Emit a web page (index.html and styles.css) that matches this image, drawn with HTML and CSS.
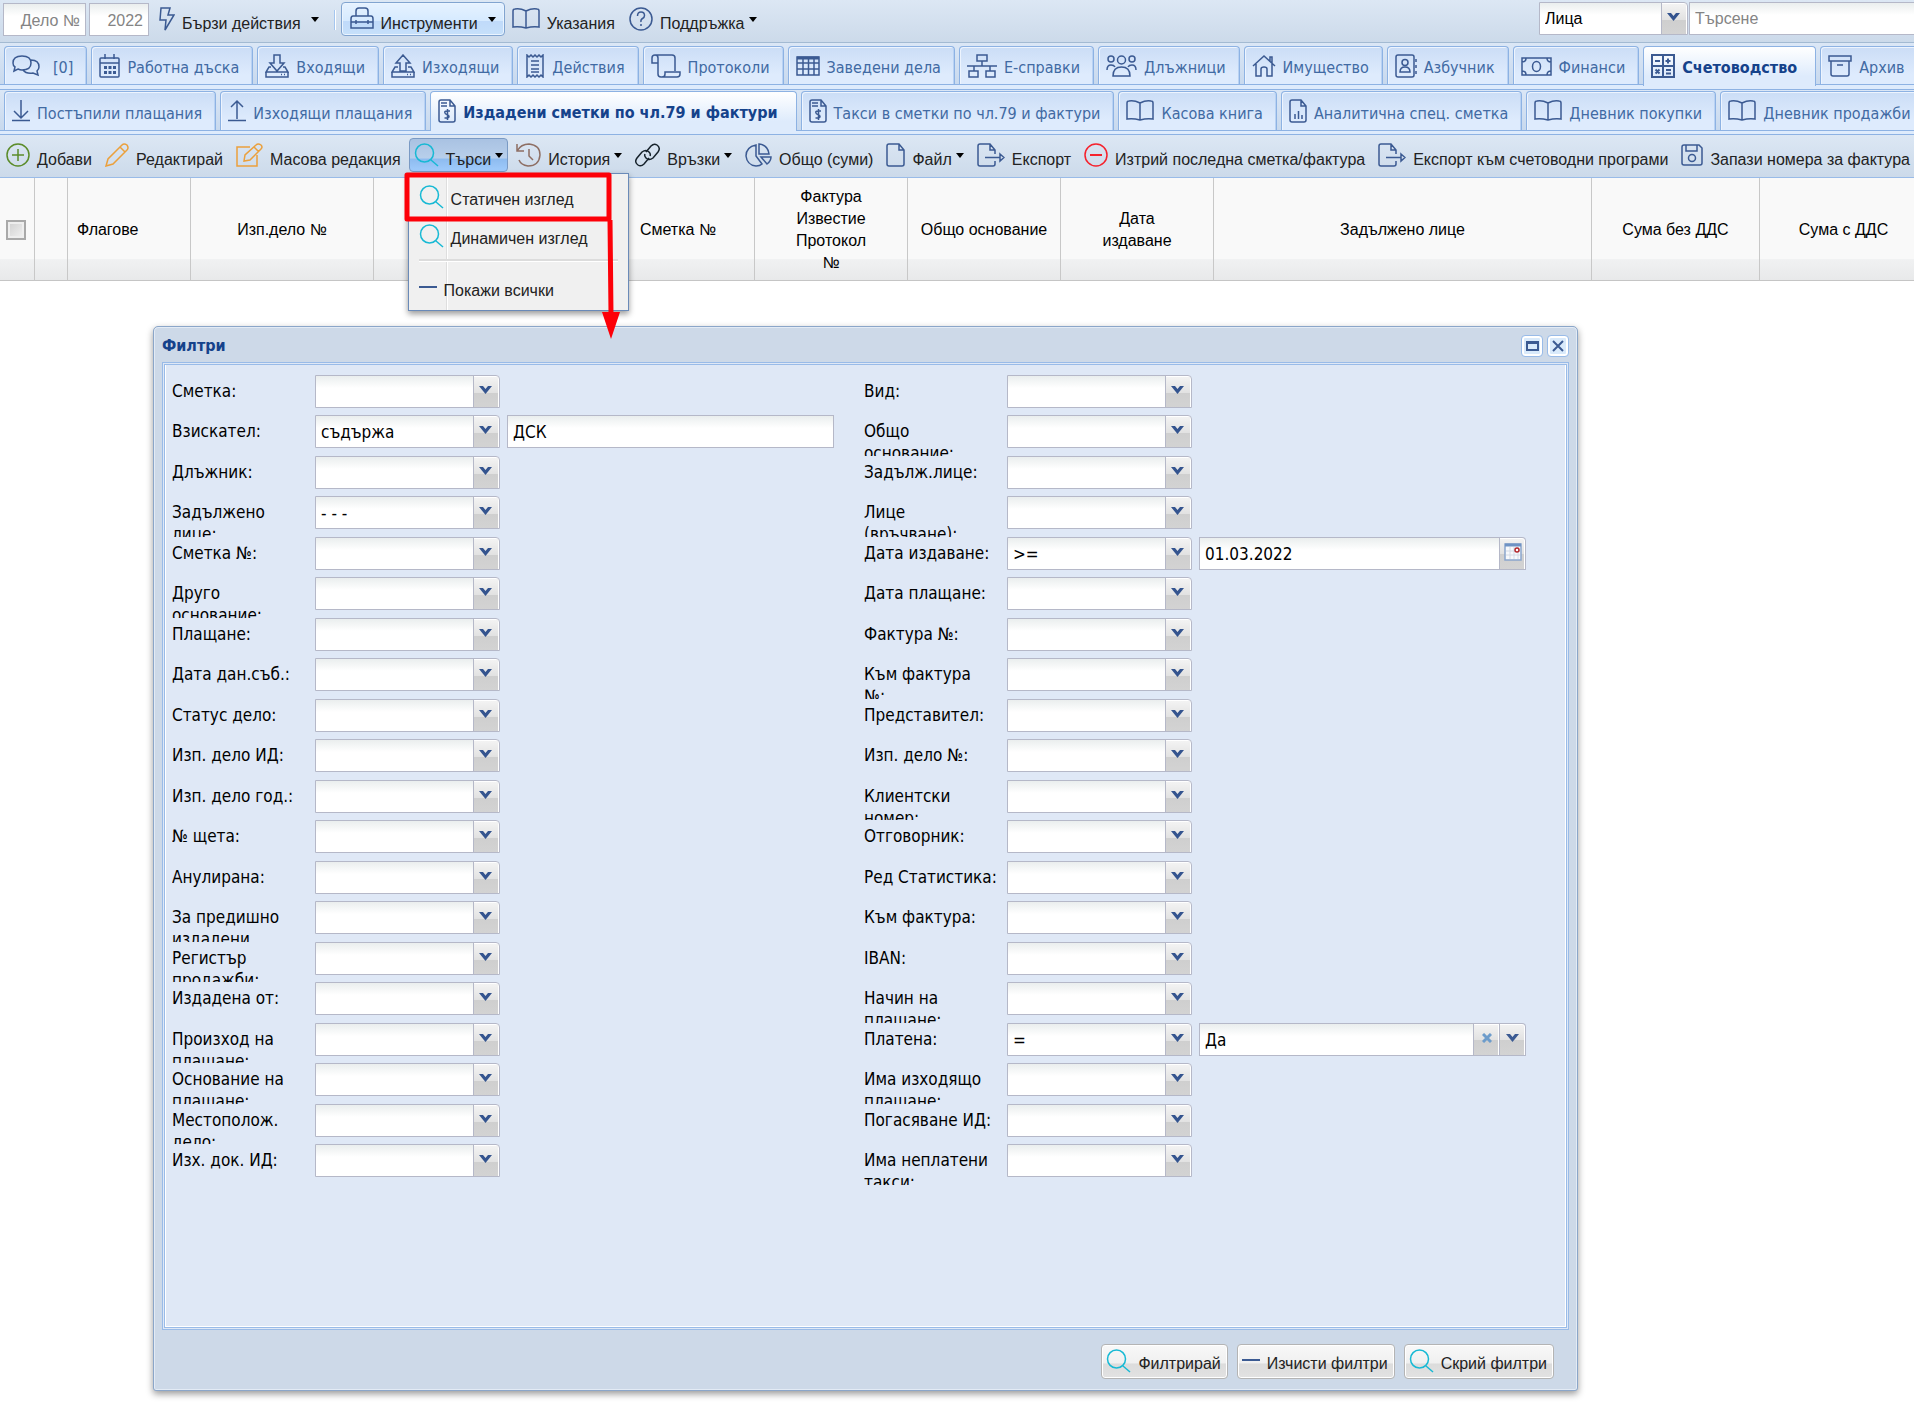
FILE: index.html
```html
<!DOCTYPE html>
<html lang="bg">
<head>
<meta charset="utf-8">
<title>Издадени сметки по чл.79 и фактури</title>
<link rel="stylesheet" href="styles.css">
</head>
<body>
<svg class="sprite" aria-hidden="true">
  <symbol id="bolt" viewBox="0 0 16 24"><path d="M2 1h9L9 8h6L6 23l1-10H1z"/></symbol>
  <symbol id="toolbox" viewBox="0 0 24 24"><path d="M6 9V4q0-3 3-3h6q3 0 3 3v5M3 9h18q2 0 2 3v9H1v-9q0-3 2-3zM1 15h22M6 13v4M18 13v4"/></symbol>
  <symbol id="book" viewBox="0 0 28 24"><path d="M14 4v17M14 4Q8 1 3 2 1 2 1 4v16q6-1 13 1 7-2 13-1V4q0-2-2-2-5-1-11 2z"/></symbol>
  <symbol id="help" viewBox="0 0 24 24"><circle cx="12" cy="12" r="11"/><path d="M8.500 9q0-4 3.500-4t3.500 3.500q0 2-2 3T12 15M12 17v2"/></symbol>
  <symbol id="chat" viewBox="0 0 28 24"><path d="M10 2q9 0 9 7t-9 7q-2 0-4-1l-4 2 1-4q-2-1-2-4 0-7 9-7zM19 6q8 0 8 7 0 2-2 4l1 4-5-2q-7 1-10-3"/></symbol>
  <symbol id="calendar" viewBox="0 0 21 24"><path d="M2 4h17q1 0 1 1v17q0 1-1 1H2q-1 0-1-1V5q0-1 1-1zM1 9h19M6 0v5M15 0v5"/><path stroke-width="3" stroke-dasharray="3 1.500" d="M5 13.500h12M5 18.500h12"/></symbol>
  <symbol id="inbox" viewBox="0 0 24 24"><path d="M9 1h6v8h4l-7 8-7-8h4zM6 13H4l-3 5h22l-3-5h-2M1 18v5h22v-5M16 20.500h1M19 20.500h1"/></symbol>
  <symbol id="outbox" viewBox="0 0 24 24"><path d="M9 17V9H5l7-8 7 8h-4v8zM7 13H4l-3 5h22l-3-5h-3M1 18v5h22v-5M16 20.500h1M19 20.500h1"/></symbol>
  <symbol id="receipt" viewBox="0 0 18 24"><path d="M1 1l2 2 2-2 2 2 2-2 2 2 2-2 2 2 2-2v22l-2-2-2 2-2-2-2 2-2-2-2 2-2-2-2 2zM5 7h8M5 11h8M5 15h8M5 18h8"/></symbol>
  <symbol id="scroll" viewBox="0 0 30 24"><path d="M4 1h17q3 0 3 3v13M4 1Q1 1 1 4v5h6V4q0-3-3-3zM7 9v11q0 3 3 3h16q3 0 3-3v-2H14v2q0 3-3 3"/></symbol>
  <symbol id="grid" viewBox="0 0 24 24"><path d="M1 3h22v18H1zM1 9h22M1 15h22M7 3v18M12.500 3v18M18 3v18"/><path stroke-width="3" d="M1 4h22"/></symbol>
  <symbol id="sitemap" viewBox="0 0 30 24"><path d="M10 1h10v6H10zM15 7v5M0 12h30M7 12v5M23 12v5M2 17h9v6H2zM19 17h9v6h-9z"/></symbol>
  <symbol id="people" viewBox="0 0 31 24"><circle cx="15.500" cy="6" r="4"/><circle cx="5" cy="5" r="3"/><circle cx="26" cy="5" r="3"/><path d="M7 22q0-9 8.500-9T24 22zM1 16q0-5 4-5 3 0 4 2M30 16q0-5-4-5-3 0-4 2"/></symbol>
  <symbol id="house" viewBox="0 0 24 24"><path d="M1 12L12 2l11 10M4 10v12h5v-7q0-2 3-2t3 2v7h5V10M18 7V3h2v6"/></symbol>
  <symbol id="contacts" viewBox="0 0 22 24"><path d="M3 1h14q2 0 2 2v18q0 2-2 2H3q-2 0-2-2V3q0-2 2-2zM21 5v3M21 11v3M21 17v3M5 18q0-5 5-5t5 5z"/><circle cx="10" cy="8.500" r="3"/></symbol>
  <symbol id="money" viewBox="0 0 31 24"><path d="M1 4h29v17H1zM1 8q4 0 4-4M30 8q-4 0-4-4M1 17q4 0 4 4M30 17q-4 0-4 4"/><ellipse cx="15.500" cy="12.500" rx="4" ry="5"/></symbol>
  <symbol id="calc" viewBox="0 0 24 24"><path stroke-width="2" d="M1 1h22v22H1zM12 1v22M1 12h22M4 7h5M14.500 7h5M17 4.500v5M4.500 15.500l4 4M8.500 15.500l-4 4M15 16h5M15 19.500h5"/></symbol>
  <symbol id="archive" viewBox="0 0 24 24"><path d="M1 2h22v5H1zM3 7v13q0 2 2 2h14q2 0 2-2V7M9 11h6"/></symbol>
  <symbol id="arrow-down" viewBox="0 0 18 24"><path d="M9 1v18M2 12l7 7 7-7M0 21.500h18"/></symbol>
  <symbol id="arrow-up" viewBox="0 0 18 24"><path d="M9 20V2M3 8l6-6 6 6M0 21.500h18"/></symbol>
  <symbol id="invoice" viewBox="0 0 18 24"><path d="M3 1h9l5 6v14q0 2-2 2H3q-2 0-2-2V3q0-2 2-2zM12 1v6h5M3 4h6M3 7h6M12 12H9q-3 0-2 2 0 1 2 1.500t2 2q0 1.500-3 1.500H6.500M9.500 10v11"/></symbol>
  <symbol id="chart" viewBox="0 0 18 24"><path d="M3 1h9l5 6v14q0 2-2 2H3q-2 0-2-2V3q0-2 2-2zM12 1v6h5M6 20v-5M9.500 20v-8M13 20v-4"/></symbol>
  <symbol id="plus" viewBox="0 0 24 24"><circle cx="12" cy="12" r="11"/><path d="M6 12h12M12 6v12"/></symbol>
  <symbol id="minus" viewBox="0 0 24 24"><circle cx="12" cy="12" r="11"/><path stroke-width="2" d="M6 12h12"/></symbol>
  <symbol id="pencil" viewBox="0 0 24 24"><path d="M1 23l2-7L17 2q2-2 5 0 2 3 0 5L8 21zM15 4l5 5"/></symbol>
  <symbol id="edit" viewBox="0 0 27 24"><path d="M14 4H1v19h20V12M8 18l1-6L20 2q2-2 5 0 2 2 0 4L14 17zM18 4l5 5"/></symbol>
  <symbol id="search" viewBox="0 0 25 24"><circle cx="10.500" cy="10" r="9"/><path d="M17 17l7 6"/></symbol>
  <symbol id="history" viewBox="0 0 25 24"><path d="M1 1v7h7M1 8Q5 1 13 1q11 1 11 11-1 11-12 11-7-1-9-6M13 6v7l4 4"/></symbol>
  <symbol id="link" viewBox="0 0 25 24"><path d="M11 9l5-6q3-3 6-1 4 3 1 7l-5 6q-4 3-7 0-2-2-1-4M14 15l-5 6q-3 3-6 1-4-3-1-7l5-6q4-3 7 0 2 2 1 4"/></symbol>
  <symbol id="pie" viewBox="0 0 27 24"><path d="M11 2Q1 4 1 13q1 9 10 10 4 0 6-2l-6-8zM14 1q9 1 10 10H14zM16 14h10q0 4-4 7z"/></symbol>
  <symbol id="file" viewBox="0 0 19 24"><path d="M3 1h10l5 6v14q0 2-2 2H3q-2 0-2-2V3q0-2 2-2zM13 1v6h5"/></symbol>
  <symbol id="export" viewBox="0 0 28 24"><path d="M18 11V7l-5-6H3Q1 1 1 3v18q0 2 2 2h13q2 0 2-2v-3M13 1v6h5M8 14.500h15M23 11l4 3.500-4 3.500z"/></symbol>
  <symbol id="save" viewBox="0 0 22 24"><path d="M3 2h15l3 3v15q0 2-2 2H3q-2 0-2-2V4q0-2 2-2zM5 2v6h11V2"/><circle cx="11" cy="15" r="3.500"/></symbol>
  <symbol id="dash" viewBox="0 0 18 24"><path stroke-width="2" d="M0 11h18"/></symbol>
  <symbol id="caret" viewBox="0 0 8 5"><path fill="currentColor" stroke="none" d="M0 0h8L4 5z"/></symbol>
</svg>

<header class="topbar">
  <input class="box case-no" type="text" placeholder="Дело №" aria-label="Дело №">
  <input class="box case-year" type="text" placeholder="2022" aria-label="Година">
  <button class="btn" type="button"><svg width="16" height="24"><use href="#bolt"/></svg><span>Бързи действия</span><svg class="caret far" width="8" height="5"><use href="#caret"/></svg></button>
  <span class="divider"></span>
  <button class="btn raised" type="button"><svg width="24" height="24"><use href="#toolbox"/></svg><span>Инструменти</span><svg class="caret far" width="8" height="5"><use href="#caret"/></svg></button>
  <button class="btn" type="button"><svg width="28" height="24"><use href="#book"/></svg><span>Указания</span></button>
  <button class="btn" type="button"><svg width="24" height="24"><use href="#help"/></svg><span>Поддръжка</span><svg class="caret" width="8" height="5"><use href="#caret"/></svg></button>
  <div class="search">
    <select class="combo" aria-label="Търсене в"><option>Лица</option></select>
    <input class="box" type="text" placeholder="Търсене" aria-label="Търсене">
  </div>
</header>

<nav class="tabs">
  <a class="tab chat" href="#"><svg width="28" height="24"><use href="#chat"/></svg><span>[0]</span></a>
  <a class="tab" href="#"><svg width="21" height="24"><use href="#calendar"/></svg><span>Работна дъска</span></a>
  <a class="tab" href="#"><svg width="24" height="24"><use href="#inbox"/></svg><span>Входящи</span></a>
  <a class="tab" href="#"><svg width="24" height="24"><use href="#outbox"/></svg><span>Изходящи</span></a>
  <a class="tab" href="#"><svg width="20" height="24"><use href="#receipt"/></svg><span>Действия</span></a>
  <a class="tab" href="#"><svg width="30" height="24"><use href="#scroll"/></svg><span>Протоколи</span></a>
  <a class="tab" href="#"><svg width="24" height="24"><use href="#grid"/></svg><span>Заведени дела</span></a>
  <a class="tab" href="#"><svg width="30" height="24"><use href="#sitemap"/></svg><span>Е-справки</span></a>
  <a class="tab" href="#"><svg width="31" height="24"><use href="#people"/></svg><span>Длъжници</span></a>
  <a class="tab" href="#"><svg width="24" height="24"><use href="#house"/></svg><span>Имущество</span></a>
  <a class="tab" href="#"><svg width="22" height="24"><use href="#contacts"/></svg><span>Азбучник</span></a>
  <a class="tab" href="#"><svg width="31" height="24"><use href="#money"/></svg><span>Финанси</span></a>
  <a class="tab active" href="#"><svg width="24" height="24"><use href="#calc"/></svg><span>Счетоводство</span></a>
  <a class="tab" href="#"><svg width="24" height="24"><use href="#archive"/></svg><span>Архив</span></a>
</nav>
<nav class="tabs">
  <a class="tab" href="#"><svg width="18" height="24"><use href="#arrow-down"/></svg><span>Постъпили плащания</span></a>
  <a class="tab" href="#"><svg width="18" height="24"><use href="#arrow-up"/></svg><span>Изходящи плащания</span></a>
  <a class="tab active" href="#"><svg width="18" height="24"><use href="#invoice"/></svg><span>Издадени сметки по чл.79 и фактури</span></a>
  <a class="tab" href="#"><svg width="18" height="24"><use href="#invoice"/></svg><span>Такси в сметки по чл.79 и фактури</span></a>
  <a class="tab" href="#"><svg width="28" height="24"><use href="#book"/></svg><span>Касова книга</span></a>
  <a class="tab" href="#"><svg width="18" height="24"><use href="#chart"/></svg><span>Аналитична спец. сметка</span></a>
  <a class="tab" href="#"><svg width="28" height="24"><use href="#book"/></svg><span>Дневник покупки</span></a>
  <a class="tab" href="#"><svg width="28" height="24"><use href="#book"/></svg><span>Дневник продажби</span></a>
</nav>

<div class="toolbar">
  <button class="btn green" type="button"><svg width="24" height="24"><use href="#plus"/></svg><span>Добави</span></button>
  <button class="btn orange" type="button"><svg width="24" height="24"><use href="#pencil"/></svg><span>Редактирай</span></button>
  <button class="btn orange" type="button"><svg width="27" height="24"><use href="#edit"/></svg><span>Масова редакция</span></button>
  <div class="menu-anchor">
    <button class="btn cyan pressed" type="button"><svg width="25" height="24"><use href="#search"/></svg><span>Търси</span><svg class="caret" width="8" height="5"><use href="#caret"/></svg></button>
    <div class="menu">
      <button class="item cyan" type="button"><svg width="25" height="24"><use href="#search"/></svg><span>Статичен изглед</span></button>
      <button class="item cyan" type="button"><svg width="25" height="24"><use href="#search"/></svg><span>Динамичен изглед</span></button>
      <hr>
      <button class="item" type="button"><svg width="18" height="24"><use href="#dash"/></svg><span>Покажи всички</span></button>
    </div>
    <svg class="callout" width="220" height="170" viewBox="0 0 220 170" aria-hidden="true"><path d="M3 3h202v44H3zM206 48l1 94" fill="none" stroke="#fd0008" stroke-width="5" stroke-linejoin="round"/><path d="M198 140h18l-9 27z" fill="#fd0008" stroke="none"/></svg>
  </div>
  <button class="btn brown" type="button"><svg width="25" height="24"><use href="#history"/></svg><span>История</span><svg class="caret" width="8" height="5"><use href="#caret"/></svg></button>
  <button class="btn black" type="button"><svg width="25" height="24"><use href="#link"/></svg><span>Връзки</span><svg class="caret" width="8" height="5"><use href="#caret"/></svg></button>
  <button class="btn" type="button"><svg width="27" height="24"><use href="#pie"/></svg><span>Общо (суми)</span></button>
  <button class="btn" type="button"><svg width="19" height="24"><use href="#file"/></svg><span>Файл</span><svg class="caret" width="8" height="5"><use href="#caret"/></svg></button>
  <button class="btn" type="button"><svg width="28" height="24"><use href="#export"/></svg><span>Експорт</span></button>
  <button class="btn red" type="button"><svg width="24" height="24"><use href="#minus"/></svg><span>Изтрий последна сметка/фактура</span></button>
  <button class="btn" type="button"><svg width="28" height="24"><use href="#export"/></svg><span>Експорт към счетоводни програми</span></button>
  <button class="btn" type="button"><svg width="22" height="24"><use href="#save"/></svg><span>Запази номера за фактура</span></button>
</div>

<main class="grid">
  <table>
    <colgroup><col class="c-check"><col class="c-mark"><col class="c-flags"><col class="c-case"><col class="c-party"><col class="c-doc"><col class="c-doc"><col class="c-doc"><col class="c-doc"><col class="c-person"><col class="c-sum"><col class="c-sum"></colgroup>
    <thead>
      <tr><th><input type="checkbox" aria-label="Избери всички"></th><th></th><th class="start">Флагове</th><th>Изп.дело №</th><th></th><th>Сметка №</th><th>Фактура<br>Известие<br>Протокол<br>№</th><th>Общо основание</th><th>Дата<br>издаване</th><th>Задължено лице</th><th>Сума без ДДС</th><th>Сума с ДДС</th></tr>
    </thead>
  </table>
</main>

<section class="window" aria-labelledby="window-title">
  <header class="titlebar">
    <h2 id="window-title">Филтри</h2>
    <button class="tool" type="button" aria-label="Увеличи"><svg width="13" height="10" viewBox="0 0 13 10"><path stroke-width="2" d="M1 1h11v8H1zM1 2h11"/></svg></button>
    <button class="tool" type="button" aria-label="Затвори"><svg width="12" height="12" viewBox="0 0 12 12"><path stroke-width="2" d="M1 1l10 10M11 1L1 11"/></svg></button>
  </header>
  <form class="filters">
    <div class="column">
      <div class="field"><label for="l1">Сметка:</label><select class="combo" id="l1"><option></option></select></div>
      <div class="field"><label for="l2">Взискател:</label><select class="combo" id="l2"><option>съдържа</option></select><input class="box value" type="text" value="ДСК" aria-label="Взискател"></div>
      <div class="field"><label for="l3">Длъжник:</label><select class="combo" id="l3"><option></option></select></div>
      <div class="field"><label for="l4">Задължено<br>лице:</label><select class="combo" id="l4"><option>- - -</option></select></div>
      <div class="field"><label for="l5">Сметка №:</label><select class="combo" id="l5"><option></option></select></div>
      <div class="field"><label for="l6">Друго<br>основание:</label><select class="combo" id="l6"><option></option></select></div>
      <div class="field"><label for="l7">Плащане:</label><select class="combo" id="l7"><option></option></select></div>
      <div class="field"><label for="l8">Дата дан.съб.:</label><select class="combo" id="l8"><option></option></select></div>
      <div class="field"><label for="l9">Статус дело:</label><select class="combo" id="l9"><option></option></select></div>
      <div class="field"><label for="l10">Изп. дело ИД:</label><select class="combo" id="l10"><option></option></select></div>
      <div class="field"><label for="l11">Изп. дело год.:</label><select class="combo" id="l11"><option></option></select></div>
      <div class="field"><label for="l12">№ щета:</label><select class="combo" id="l12"><option></option></select></div>
      <div class="field"><label for="l13">Анулирана:</label><select class="combo" id="l13"><option></option></select></div>
      <div class="field"><label for="l14">За предишно<br>издадени</label><select class="combo" id="l14"><option></option></select></div>
      <div class="field"><label for="l15">Регистър<br>продажби:</label><select class="combo" id="l15"><option></option></select></div>
      <div class="field"><label for="l16">Издадена от:</label><select class="combo" id="l16"><option></option></select></div>
      <div class="field"><label for="l17">Произход на<br>плащане:</label><select class="combo" id="l17"><option></option></select></div>
      <div class="field"><label for="l18">Основание на<br>плащане:</label><select class="combo" id="l18"><option></option></select></div>
      <div class="field"><label for="l19">Местополож.<br>дело:</label><select class="combo" id="l19"><option></option></select></div>
      <div class="field"><label for="l20">Изх. док. ИД:</label><select class="combo" id="l20"><option></option></select></div>
    </div>
    <div class="column">
      <div class="field"><label for="r1">Вид:</label><select class="combo" id="r1"><option></option></select></div>
      <div class="field"><label for="r2">Общо<br>основание:</label><select class="combo" id="r2"><option></option></select></div>
      <div class="field"><label for="r3">Задълж.лице:</label><select class="combo" id="r3"><option></option></select></div>
      <div class="field"><label for="r4">Лице<br>(връчване):</label><select class="combo" id="r4"><option></option></select></div>
      <div class="field"><label for="r5">Дата издаване:</label><select class="combo" id="r5"><option>&gt;=</option></select><div class="value joined"><input class="box" type="text" value="01.03.2022" aria-label="Дата издаване"><button class="trigger" type="button" aria-label="Календар"><svg width="18" height="18" viewBox="0 0 18 18"><path fill="#f7f9fc" stroke="#8aa5cc" d="M1 1h16v16H1z"/><path stroke="#6f93c4" stroke-width="3" d="M1 2h16"/><path stroke="#d3dae6" stroke-width="1" d="M2 8h14M2 12h14M6 4v12M10 4v12M14 4v12"/><circle cx="13" cy="7" r="2" fill="#fff" stroke="#b3262b"/></svg></button></div></div>
      <div class="field"><label for="r6">Дата плащане:</label><select class="combo" id="r6"><option></option></select></div>
      <div class="field"><label for="r7">Фактура №:</label><select class="combo" id="r7"><option></option></select></div>
      <div class="field"><label for="r8">Към фактура<br>№:</label><select class="combo" id="r8"><option></option></select></div>
      <div class="field"><label for="r9">Представител:</label><select class="combo" id="r9"><option></option></select></div>
      <div class="field"><label for="r10">Изп. дело №:</label><select class="combo" id="r10"><option></option></select></div>
      <div class="field"><label for="r11">Клиентски<br>номер:</label><select class="combo" id="r11"><option></option></select></div>
      <div class="field"><label for="r12">Отговорник:</label><select class="combo" id="r12"><option></option></select></div>
      <div class="field"><label for="r13">Ред Статистика:</label><select class="combo" id="r13"><option></option></select></div>
      <div class="field"><label for="r14">Към фактура:</label><select class="combo" id="r14"><option></option></select></div>
      <div class="field"><label for="r15">IBAN:</label><select class="combo" id="r15"><option></option></select></div>
      <div class="field"><label for="r16">Начин на<br>плащане:</label><select class="combo" id="r16"><option></option></select></div>
      <div class="field"><label for="r17">Платена:</label><select class="combo" id="r17"><option>=</option></select><div class="value joined"><input class="box" type="text" value="Да" aria-label="Платена"><button class="trigger clear" type="button" aria-label="Изчисти"><svg width="10" height="10" viewBox="0 0 10 10"><path stroke-width="3" d="M1 1l8 8M9 1L1 9"/></svg></button><button class="trigger" type="button" aria-label="Отвори"><svg width="13" height="8" viewBox="0 0 13 8"><path fill="currentColor" stroke="none" d="M0 0h4l2.500 3L9 0h4L6.500 8z"/></svg></button></div></div>
      <div class="field"><label for="r18">Има изходящо<br>плащане:</label><select class="combo" id="r18"><option></option></select></div>
      <div class="field"><label for="r19">Погасяване ИД:</label><select class="combo" id="r19"><option></option></select></div>
      <div class="field"><label for="r20">Има неплатени<br>такси:</label><select class="combo" id="r20"><option></option></select></div>
    </div>
  </form>
  <footer class="actions">
    <button class="push cyan" type="button"><svg width="25" height="24"><use href="#search"/></svg><span>Филтрирай</span></button>
    <button class="push" type="button"><svg width="18" height="24"><use href="#dash"/></svg><span>Изчисти филтри</span></button>
    <button class="push cyan" type="button"><svg width="25" height="24"><use href="#search"/></svg><span>Скрий филтри</span></button>
  </footer>
</section>
</body>
</html>
```
FILE: styles.css
```css
* { box-sizing: border-box; }

:root {
  --ui: "Liberation Sans", Arial, sans-serif;
  --form: "DejaVu Sans Condensed", Tahoma, sans-serif;
  --navy: #3b5a92;
  --line: #99bbe8;
  --edge: #b5b8c8;
}

body {
  margin: 0;
  min-height: 100vh;
  position: relative;
  overflow: hidden;
  background: #fff;
  color: #000;
  font: 16px/22px var(--ui);
}

button, input, select { font: inherit; margin: 0; }
button { cursor: pointer; color: #222; }
svg { flex: none; fill: none; stroke: currentColor; stroke-width: 1.5; color: var(--navy); }
.sprite { display: none; }
.green > svg { color: #5b8c2a; }
.orange > svg { color: #eba03c; }
.cyan > svg { color: #17b9d4; }
.brown > svg { color: #8d6e63; }
.black > svg { color: #16222b; }
.red > svg { color: #f5222d; }
svg.caret { color: #000; margin: 0 0 0 4px; }
svg.caret.far { margin-left: 10px; }

/* text boxes and drop-downs */
.box {
  height: 33px;
  min-width: 0;
  border: 1px solid var(--edge);
  border-radius: 0;
  padding: 1px 5px 0;
  color: #000;
  background: #fff linear-gradient(#eaeeee, #fff) 0 0 / 100% 12px no-repeat;
}
.box::placeholder { color: #848484; opacity: 1; }
.combo {
  appearance: none;
  flex: none;
  width: 185px;
  height: 33px;
  border: 1px solid var(--edge);
  border-radius: 0 4px 0 0;
  padding: 1px 30px 0 5px;
  color: #000;
  background:
    url("data:image/svg+xml,%3Csvg xmlns='http://www.w3.org/2000/svg' width='13' height='8'%3E%3Cpath fill='%2334548f' d='M0 0h4l2.500 3L9 0h4L6.500 8z'/%3E%3C/svg%3E") right 7px top 10px no-repeat,
    linear-gradient(#f3f3f3, #e2e2e2 50%, #cfcfcf 52%, #d3d3d3) right 1px top 1px / 24px 100% no-repeat,
    linear-gradient(#fff, #fff) right 0 top 0 / 25px 100% no-repeat,
    linear-gradient(var(--edge), var(--edge)) right 25px top 0 / 1px 100% no-repeat,
    #fff linear-gradient(#eaeeee, #fff) 0 0 / 100% 12px no-repeat;
}

/* top bar */
.topbar {
  display: flex;
  align-items: flex-start;
  height: 43px;
  padding: 2px 0 0 3px;
  background: linear-gradient(#dce7f4, #ccdaea);
  border-bottom: 1px solid #a3bad2;
}
.topbar > .box { margin: 1px 3px 0 0; padding-top: 2px; text-align: right; }
.case-no { width: 83px; }
.case-year { width: 60px; }
.btn {
  display: flex;
  align-items: center;
  flex: none;
  height: 34px;
  padding: 0 4px;
  border: 1px solid transparent;
  border-radius: 4px;
  background: none;
  white-space: nowrap;
}
.btn > span { padding: 10px 0 0 7px; }
.topbar .btn { padding: 0 6px; }
.divider {
  width: 2px;
  height: 20px;
  margin: 8px 5px 0 8px;
  background: linear-gradient(90deg, #a5c6ef 50%, #fff 50%);
}
.topbar .raised {
  padding: 0 8px;
  border-color: #81a4d0;
  background: linear-gradient(#e6f2ff, #d6eaff 55%, #c0dafa 57%, #c6e0fa);
  box-shadow: inset 0 0 0 1px #eaf4ff;
}
.search { display: flex; gap: 1px; margin: 0 -2px 0 auto; width: 377px; }
.search .combo { width: 149px; }
.search .box { flex: 1; }

/* tab strips */
.tabs {
  display: flex;
  gap: 4px;
  height: 47px;
  padding: 3px 4px 0;
  background: linear-gradient(#dbe7f6, #c8d9ee 41px, #8db2e3 41px, #8db2e3 42px, #deebfc 42px);
  border-bottom: 1px solid #8db2e3;
}
.tabs + .tabs { height: 45px; padding-top: 1px; background: linear-gradient(#dbe7f6, #c8d9ee 40px, #8db2e3 40px, #8db2e3 41px, #deebfc 41px); }
.tab {
  display: flex;
  align-items: center;
  flex: none;
  height: 38px;
  padding: 0 13px 0 7px;
  border: 1px solid #8db2e3;
  border-bottom: 0;
  border-radius: 4px 4px 0 0;
  background: linear-gradient(#cbddf6, #deebfd 75%);
  box-shadow: inset 1px 1px 0 #edf4fe, inset -1px 0 0 #b9d2f3;
  color: #416aa3;
  font-family: var(--form);
  white-space: nowrap;
  text-decoration: none;
}
.tabs + .tabs .tab { height: 39px; }
.tab > span { padding: 5px 0 0 7px; }
.tab.chat > span { padding-left: 13px; }
.tab.active, .tabs + .tabs .tab.active {
  height: 40px;
  padding-right: 18px;
  padding-bottom: 2px;
  background: linear-gradient(#fff, #deebfc 75%);
  box-shadow: none;
  color: #15428b;
  font-weight: bold;
}

/* action bar */
.toolbar {
  display: flex;
  align-items: flex-start;
  gap: 3px;
  height: 43px;
  padding: 3px 1px 0;
  background: linear-gradient(#dce7f4, #ccdaea);
  border-bottom: 1px solid var(--line);
}
.pressed {
  border-color: #7a9ac4;
  background: linear-gradient(#a9c2e2, #b8cfeb 60%, #8dbbef 62%, #a0cbfc);
}

/* drop-down menu */
.menu-anchor { position: relative; z-index: 3; }
.menu {
  position: absolute;
  top: 35px;
  left: -1px;
  width: 221px;
  height: 138px;
  padding: 3px 10px;
  border: 1px solid #6a8ab8;
  background: linear-gradient(90deg, transparent 37px, #dedede 37px, #dedede 38px, #fff 38px, #fff 39px, transparent 39px), #f0f0f0;
  box-shadow: 0 3px 6px rgba(0, 0, 0, .4);
}
.item {
  display: flex;
  align-items: center;
  width: 100%;
  height: 39px;
  padding: 0;
  border: 0;
  background: none;
  white-space: nowrap;
}
.item > span { padding: 7px 0 0 7px; }
.menu hr { margin: 4px 0 6px; border: 0; border-top: 2px solid #dcdcdc; border-bottom: 1px solid #fff; }
.callout { position: absolute; top: 34px; left: -5px; }

/* grid header */
.grid { overflow: hidden; }
table { width: 1927px; table-layout: fixed; border-collapse: separate; border-spacing: 0; }
.c-check { width: 35px; }
.c-mark { width: 33px; }
.c-flags { width: 123px; }
.c-case { width: 183px; }
.c-party { width: 228px; }
.c-doc { width: 153px; }
.c-person { width: 378px; }
.c-sum { width: 168px; }
th {
  height: 103px;
  padding: 2px 6px 0;
  border-right: 1px solid #c8c8c8;
  border-bottom: 1px solid #c5c5c5;
  background: linear-gradient(#f9f9f9 79%, #f0f1f2 80%, #e8e9ea);
  font-weight: normal;
}
th.start { padding-left: 9px; text-align: left; }
th input {
  appearance: none;
  display: block;
  width: 20px;
  height: 20px;
  border: 2px solid #a9a9a9;
  background: linear-gradient(135deg, #cfcfcf, #f2f2f2);
  box-shadow: inset 0 0 0 2px #eee;
}

/* filter window */
.window {
  position: absolute;
  top: 326px;
  left: 153px;
  width: 1425px;
  padding: 0 8px;
  border: 1px solid #8ba6c9;
  border-radius: 5px 5px 3px 3px;
  background: #cdd9e8;
  box-shadow: inset 0 0 0 1px #e3ebf5, 0 3px 7px rgba(0, 0, 0, .4);
}
.titlebar { display: flex; align-items: center; gap: 4px; height: 35px; padding-top: 2px; }
.titlebar h2 { flex: 1; margin: 0; color: #15428b; font: bold 16px/22px var(--form); }
.tool {
  display: grid;
  place-items: center;
  width: 22px;
  height: 22px;
  padding: 0;
  border: 1px solid var(--line);
  border-radius: 4px;
  background: #d9eafb;
  box-shadow: inset 0 0 0 2px #fff;
}
.filters {
  display: grid;
  grid-template-columns: 1fr 1fr;
  align-content: start;
  min-height: 968px;
  padding: 10px 10px 10px 7px;
  border: 3px double var(--line);
  background: #dfe8f6;
  box-shadow: inset 1px 0 0 #fff, inset -1px -1px 0 #fff;
  font: 17px/22px var(--form);
}
.field { display: flex; height: 40px; overflow: hidden; }
.field:nth-child(even) { height: 41px; }
.field label { flex: none; width: 143px; padding-top: 5px; }
.value { flex: none; width: 327px; margin-left: 7px; }
.joined { display: flex; }
.joined .box { flex: 1; }
.trigger {
  display: grid;
  justify-items: center;
  align-content: start;
  width: 26px;
  height: 33px;
  padding: 5px 0 0;
  border: 1px solid var(--edge);
  border-left: 0;
  border-radius: 0 4px 0 0;
  background: linear-gradient(#f3f3f3, #e2e2e2 50%, #cfcfcf 52%, #d3d3d3);
  box-shadow: inset 0 1px 0 #fff, inset -1px 0 0 #fff;
}
.clear { border-radius: 0; padding-top: 9px; }
.clear > svg { color: #6d9ccb; }
.clear + .trigger { padding-top: 10px; }
.actions { display: flex; justify-content: flex-end; gap: 9px; padding: 14px 15px 11px; }
.push {
  display: flex;
  align-items: center;
  height: 35px;
  padding: 0 6px 2px 4px;
  border: 1px solid #b4b4b4;
  border-radius: 4px;
  background: linear-gradient(#f8f8f8, #f0f0f0 55%, #dcdcdc 57%, #e2e2e2);
  box-shadow: inset 0 0 0 1px #fff;
  white-space: nowrap;
}
.push > span { padding: 7px 0 0 7px; }
```
